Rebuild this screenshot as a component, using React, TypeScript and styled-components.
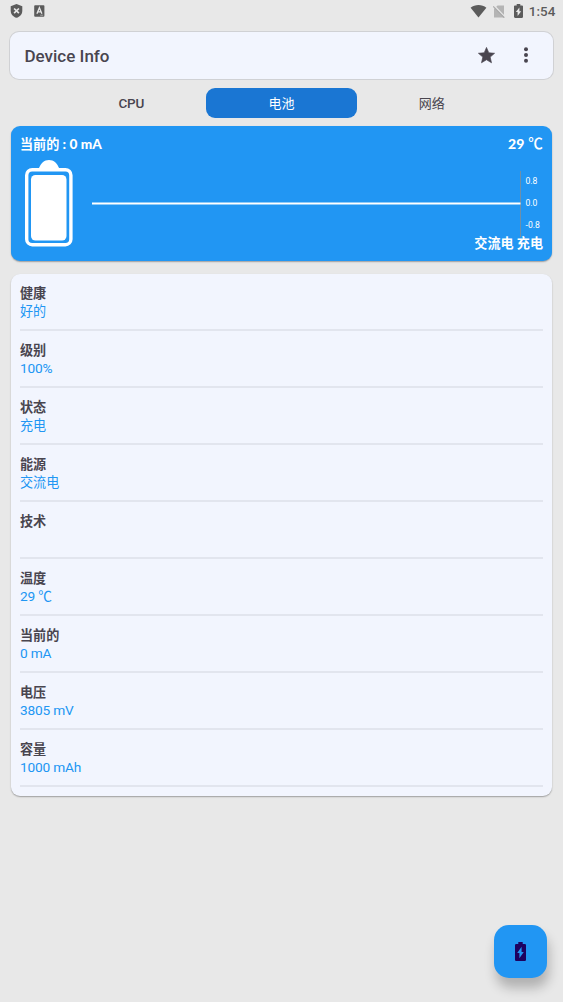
import React from 'react';
import styled, { createGlobalStyle, css } from 'styled-components';

const Global = createGlobalStyle`
  * { box-sizing: border-box; }
  body {
    margin: 0;
    background: #e8e8e8;
    color: #49454f;
    font-family: Roboto, 'Noto Sans CJK SC', sans-serif;
    font-size: 13px;
  }
`;

const Screen = styled.div`
  position: relative;
  height: 1002px;
  overflow: hidden;
  background: #e8e8e8;
`;

const StatusBar = styled.div`
  display: flex;
  align-items: center;
  justify-content: space-between;
  height: 22px;
  padding: 0 7.5px 0 10.3px;
  color: #5b5b5b;
`;

const StatusGroup = styled.div<{ $gap: number }>`
  display: flex;
  align-items: center;
  gap: ${(p) => p.$gap}px;
`;

const Clock = styled.span`
  font-size: 13.4px;
  font-weight: 500;
  letter-spacing: 0.1px;
  line-height: 16px;
  padding-top: 2px;
  margin-left: -3px;
`;

const AppBar = styled.header`
  display: flex;
  align-items: center;
  height: 47px;
  margin: 10px 10px 0;
  padding: 0 17.5px 0 14.5px;
  border-radius: 9px;
  background: #f2f5fe;
  box-shadow: 0 0 0 1px #d0d1d4;
`;

const Title = styled.h1`
  flex: 1;
  margin: 0;
  font-size: 17px;
  font-weight: 500;
  line-height: 22px;
`;

const IconButton = styled.button`
  display: flex;
  justify-content: center;
  width: 20px;
  margin: -1px 0 0 19.5px;
  padding: 0;
  border: 0;
  background: none;
  color: #49454f;
`;

const Tabs = styled.nav`
  display: flex;
  height: 30px;
  margin: 9px 56.2px 0 56.2px;
`;

const Tab = styled.button<{ $active?: boolean; $latin?: boolean }>`
  flex: 1;
  padding: 0;
  border: 0;
  border-radius: 9px;
  background: none;
  color: #49454f;
  font: ${(p) => (p.$latin ? '500 13.5px' : '400 13px')}/31px Roboto, 'Noto Sans CJK SC', sans-serif;
  letter-spacing: ${(p) => (p.$latin ? '-0.3px' : '0')};
  ${(p) =>
    p.$active &&
    css`
      background: #1a76d3;
      color: #fff;
    `}
`;

const Panel = styled.section`
  margin: 0 11px 0 10.5px;
  border-radius: 9px;
  box-shadow: 0 1px 1.5px rgba(0, 0, 0, 0.32);
`;

const BatteryPanel = styled(Panel)`
  height: 135px;
  margin-top: 8px;
  padding: 9px 9px 0 9.5px;
  background: #2196f3;
  color: #fff;
  font-family: Lato, 'Noto Sans CJK SC', sans-serif;
  font-size: 13.1px;
  font-weight: 700;
`;

const PanelHead = styled.div`
  display: flex;
  justify-content: space-between;
  height: 25px;
  line-height: 18px;
`;

const Reading = styled.span`
  font-size: 13.6px;
  font-weight: 900;
  letter-spacing: 0.1px;
`;

const Temperature = styled.span`
  font-size: 14px;
  font-weight: 900;
  letter-spacing: 0.2px;
`;

const Celsius = styled.span`
  font-size: 14.6px;
  font-weight: 500;
`;

const PanelBody = styled.div`
  display: flex;
  gap: 19px;
  padding-left: 5px;
`;

const ChartColumn = styled.div`
  display: flex;
  flex: 1;
  flex-direction: column;
  align-items: flex-end;
  padding-top: 11px;
`;

const Chart = styled.svg`
  display: block;
  overflow: visible;
  font: 400 8.6px Roboto, sans-serif;
`;

const ChargeState = styled.div`
  line-height: 18px;
`;

const InfoPanel = styled(Panel)`
  margin-top: 13px;
  padding: 0 9px 9px 9.5px;
  background: #f2f5fe;
`;

const InfoRow = styled.div`
  height: 57px;
  padding-top: 10px;
  border-bottom: 2px solid #e2e5ee;
  line-height: 19px;
`;

const Label = styled.div`
  height: 18px;
  font-size: 13.1px;
  font-weight: 700;
`;

const Value = styled.div<{ $latin: boolean }>`
  color: #2196f3;
  font-size: ${(p) => (p.$latin ? 13.7 : 13.1)}px;
  letter-spacing: ${(p) => (p.$latin ? -0.2 : 0)}px;
`;

const Fab = styled.button`
  position: absolute;
  right: 16px;
  bottom: 24px;
  display: flex;
  align-items: center;
  justify-content: center;
  width: 53px;
  height: 53px;
  padding: 0;
  border: 0;
  border-radius: 15px;
  background: #2196f3;
  color: #1d0160;
  box-shadow: 2px 10px 12px rgba(0, 0, 0, 0.24);
`;

const rows: [string, string][] = [
  ['健康', '好的'],
  ['级别', '100%'],
  ['状态', '充电'],
  ['能源', '交流电'],
  ['技术', ''],
  ['温度', '29 ℃'],
  ['当前的', '0 mA'],
  ['电压', '3805 mV'],
  ['容量', '1000 mAh'],
];

const ChargingIcon = ({ width, height }: { width: number; height: number }) => (
  <svg width={width} height={height} viewBox="7 2 10 20" preserveAspectRatio="none" fill="currentColor">
    <path d="M15.67 4H14V2h-4v2H8.33C7.6 4 7 4.6 7 5.33v15.33C7 21.4 7.6 22 8.33 22h7.33c.74 0 1.34-.6 1.34-1.33V5.33C17 4.6 16.4 4 15.67 4zM11 19v-5.500H9L13 7v5.500h2L11 19z" />
  </svg>
);

export default function App() {
  return (
    <Screen>
      <Global />
      <StatusBar>
        <StatusGroup $gap={11}>
          <svg width="13" height="14" viewBox="0 0 13 14">
            <path d="M6.5 0 12.3 2.3v4.4c0 3.3-2.4 6.2-5.8 7.1C3.1 12.9.7 10 .7 6.7V2.3z" fill="#5b5b5b" />
            <path d="M4.1 4.5 8.9 9.2M8.9 4.5 4.1 9.2" stroke="#e8e8e8" strokeWidth="1.7" />
          </svg>
          <svg width="11" height="12" viewBox="0 0 11 12">
            <rect x="0.2" y="0.2" width="10.2" height="11.5" rx="0.9" fill="#5b5b5b" />
            <path d="M2.9 8.7 5.4 2.7 7.9 8.7M3.8 6.8h3.2" fill="none" stroke="#e8e8e8" strokeWidth="1.3" />
            <path d="M6.2 10.2h3" stroke="#bbb" strokeWidth="0.8" />
          </svg>
        </StatusGroup>
        <StatusGroup $gap={9}>
          <svg width="17" height="14" viewBox="0 0 17 14">
            <path d="M.6 3.8C5 .1 12 .1 16.4 3.8L8.5 13.5z" fill="#5b5b5b" />
          </svg>
          <svg width="12" height="13" viewBox="0 0 12 13" style={{ marginLeft: -3 }}>
            <path d="M4.5.5H11V12.5H1V4z" fill="#b4b4b4" />
            <path d="M.8.2 12 12" stroke="#e8e8e8" strokeWidth="1.4" />
            <path d="M.2 1.3 11.3 12.7" stroke="#aaa" strokeWidth="1.2" />
          </svg>
          <ChargingIcon width={9} height={14} />
          <Clock>1:54</Clock>
        </StatusGroup>
      </StatusBar>

      <AppBar>
        <Title>Device Info</Title>
        <IconButton aria-label="favorite">
          <svg width="17" height="17" viewBox="1.5 1.5 21 21" fill="currentColor" stroke="currentColor" strokeWidth="0.8" strokeLinejoin="round">
            <path d="M12 17.27 18.18 21l-1.64-7.03L22 9.24l-7.19-.61L12 2 9.19 8.63 2 9.24l5.46 4.73L5.82 21z" />
          </svg>
        </IconButton>
        <IconButton aria-label="more">
          <svg width="4" height="16" viewBox="0 0 4 16" fill="currentColor">
            <circle cx="2" cy="2.2" r="2" />
            <circle cx="2" cy="8" r="2" />
            <circle cx="2" cy="13.8" r="2" />
          </svg>
        </IconButton>
      </AppBar>

      <Tabs>
        <Tab $latin>CPU</Tab>
        <Tab $active>电池</Tab>
        <Tab>网络</Tab>
      </Tabs>

      <BatteryPanel>
        <PanelHead>
          <span>
            当前的 <Reading>: 0 mA</Reading>
          </span>
          <Temperature>
            29 <Celsius>℃</Celsius>
          </Temperature>
        </PanelHead>
        <PanelBody>
          <svg width="48" height="87" viewBox="0 0 48 87">
            <path d="M13.5 9C16 3 19 0 24 0s8 3 10.5 9z" fill="#fff" />
            <rect x="1.7" y="9.7" width="44.2" height="75" rx="5.5" fill="#2196f3" stroke="#fff" strokeWidth="3.4" />
            <rect x="6" y="15" width="35.5" height="65.5" rx="4.5" fill="#fff" />
          </svg>
          <ChartColumn>
            <Chart width="451" height="63">
              <path d="M428.5 0V66" stroke="#6f8fa8" />
              <path d="M0 32.5H428.5" stroke="#fff" strokeWidth="2.2" />
              <g fill="#fff">
                <text x="433.5" y="13">0.8</text>
                <text x="433.5" y="35">0.0</text>
                <text x="433.5" y="57">-0.8</text>
              </g>
            </Chart>
            <ChargeState>交流电 充电</ChargeState>
          </ChartColumn>
        </PanelBody>
      </BatteryPanel>

      <InfoPanel>
        {rows.map(([label, value]) => (
          <InfoRow key={label}>
            <Label>{label}</Label>
            <Value $latin={/^\d/.test(value)}>{value}</Value>
          </InfoRow>
        ))}
      </InfoPanel>

      <Fab aria-label="battery">
        <ChargingIcon width={11} height={19} />
      </Fab>
    </Screen>
  );
}
